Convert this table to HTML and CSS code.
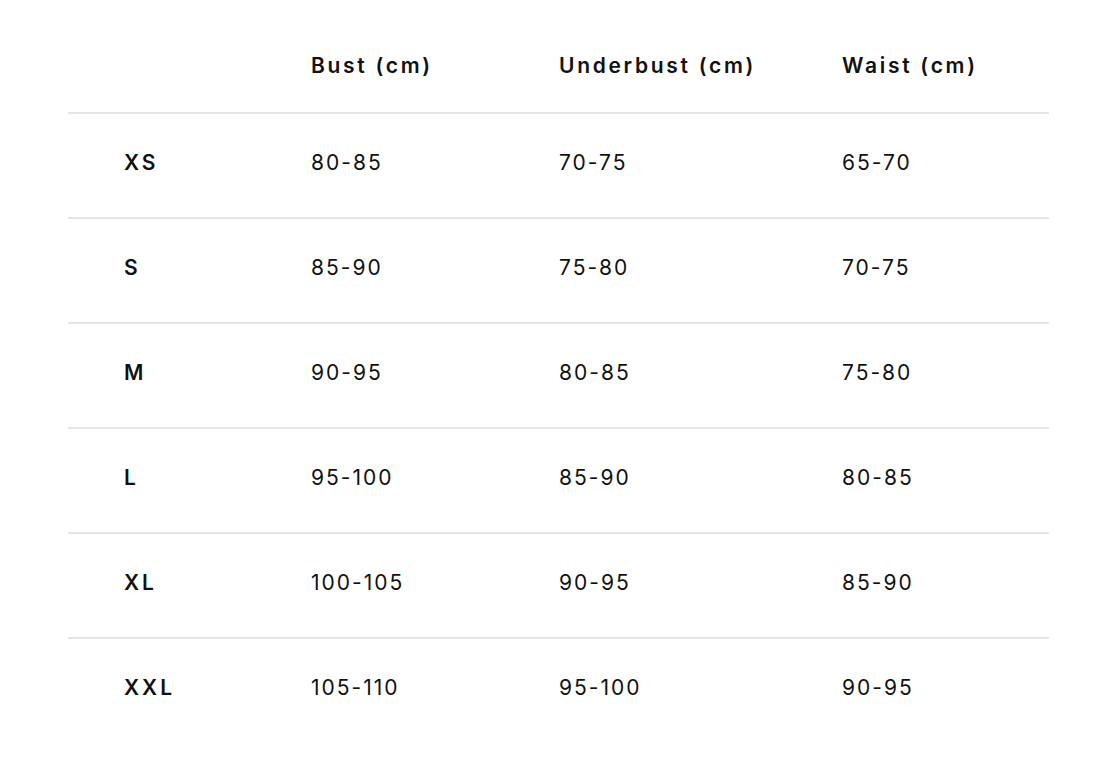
FILE: index.html
```html
<!DOCTYPE html>
<html lang="en">
<head>
<meta charset="utf-8">
<title>Size chart</title>
<link rel="stylesheet" href="styles.css">
</head>
<body>
<div class="chart">
  <div class="row head">
    <div class="cell size"></div>
    <div class="cell">Bust (cm)</div>
    <div class="cell">Underbust (cm)</div>
    <div class="cell">Waist (cm)</div>
  </div>
  <div class="row">
    <div class="cell size">XS</div>
    <div class="cell">80-85</div>
    <div class="cell">70-75</div>
    <div class="cell">65-70</div>
  </div>
  <div class="row">
    <div class="cell size">S</div>
    <div class="cell">85-90</div>
    <div class="cell">75-80</div>
    <div class="cell">70-75</div>
  </div>
  <div class="row">
    <div class="cell size">M</div>
    <div class="cell">90-95</div>
    <div class="cell">80-85</div>
    <div class="cell">75-80</div>
  </div>
  <div class="row">
    <div class="cell size">L</div>
    <div class="cell">95-100</div>
    <div class="cell">85-90</div>
    <div class="cell">80-85</div>
  </div>
  <div class="row">
    <div class="cell size">XL</div>
    <div class="cell">100-105</div>
    <div class="cell">90-95</div>
    <div class="cell">85-90</div>
  </div>
  <div class="row last">
    <div class="cell size">XXL</div>
    <div class="cell">105-110</div>
    <div class="cell">95-100</div>
    <div class="cell">90-95</div>
  </div>
</div>
</body>
</html>
```
FILE: styles.css
```css
html, body {
  margin: 0;
  padding: 0;
  background: #ffffff;
}

body {
  font-family: Inter, "Liberation Sans", sans-serif;
  color: #111111;
}

.chart {
  margin: 0 67px 0 68px;
  display: flex;
  flex-direction: column;
}

.row {
  display: grid;
  grid-template-columns: 243px 248px 283px 1fr;
  align-items: center;
  height: 98px;
  padding-bottom: 5px;
  box-sizing: content-box;
  border-bottom: 2px solid #e6e6e6;
  font-size: 21px;
  letter-spacing: 2px;
  font-weight: 400;
}

.row.head {
  height: 112px;
  padding-bottom: 0;
  align-items: start;
}

.row.head .cell {
  padding-top: 54px;
  font-weight: 600;
  letter-spacing: 2.7px;
  color: #111;
}

.row.last {
  border-bottom: none;
}

.cell {
  line-height: 24px;
}

.cell.size {
  padding-left: 56px;
  font-weight: 600;
  letter-spacing: 3px;
  color: #111;
}
```
